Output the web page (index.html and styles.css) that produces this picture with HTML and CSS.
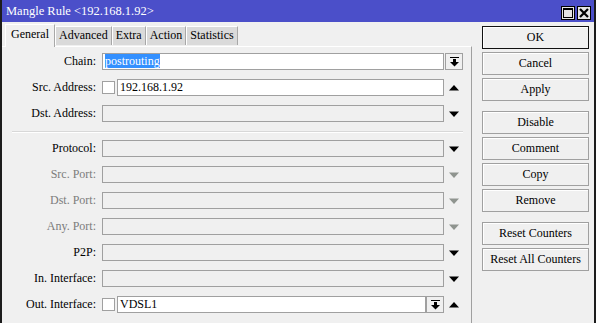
FILE: index.html
```html
<!DOCTYPE html>
<html lang="en">

<head>
    <meta charset="UTF-8">
    <title>Mangle Rule</title>
    <link rel="stylesheet" href="styles.css">
</head>

<body>
    <div class="window">
        <div class="titlebar">
            <span class="title">Mangle Rule &lt;192.168.1.92&gt;</span>
            <div class="controls">
                <div class="ctl">
                    <svg width="10" height="10" viewBox="0 0 10 10">
                        <rect x="0.5" y="0.5" width="9" height="9" fill="none" stroke="#000" />
                        <rect x="0" y="0" width="10" height="2" fill="#000" />
                    </svg>
                </div>
                <div class="ctl">
                    <svg width="10" height="10" viewBox="0 0 10 10">
                        <path d="M1 1 L9 9 M9 1 L1 9" stroke="#000" stroke-width="2.2" />
                    </svg>
                </div>
            </div>
        </div>

        <div class="main">
            <div class="left">
                <div class="tabs">
                    <div class="tab active">General</div>
                    <div class="tab">Advanced</div>
                    <div class="tab">Extra</div>
                    <div class="tab">Action</div>
                    <div class="tab">Statistics</div>
                </div>
                <div class="panel">
                    <div class="row">
                        <div class="label">Chain:</div>
                        <div class="field">
                            <div class="input"><span class="selected">postrouting</span></div>
                        </div>
                        <div class="side">
                            <div class="drop">
                                <svg width="9" height="10" viewBox="0 0 9 10">
                                    <rect x="0" y="0" width="9" height="1" fill="#000" />
                                    <rect x="3" y="2" width="3" height="3" fill="#000" />
                                    <polygon points="0,5 9,5 4.5,9.5" fill="#000" />
                                </svg>
                            </div>
                        </div>
                    </div>
                    <div class="row">
                        <div class="label">Src. Address:</div>
                        <div class="field">
                            <div class="check"></div>
                            <div class="input">192.168.1.92</div>
                        </div>
                        <div class="side">
                            <svg width="10" height="6" viewBox="0 0 10 6"><polygon points="0,5.5 10,5.5 5,0" fill="#000" /></svg>
                        </div>
                    </div>
                    <div class="row">
                        <div class="label">Dst. Address:</div>
                        <div class="field">
                            <div class="input off"></div>
                        </div>
                        <div class="side">
                            <svg width="10" height="6" viewBox="0 0 10 6"><polygon points="0,0.5 10,0.5 5,6" fill="#000" /></svg>
                        </div>
                    </div>

                    <div class="separator"></div>

                    <div class="row">
                        <div class="label">Protocol:</div>
                        <div class="field">
                            <div class="input off"></div>
                        </div>
                        <div class="side">
                            <svg width="10" height="6" viewBox="0 0 10 6"><polygon points="0,0.5 10,0.5 5,6" fill="#000" /></svg>
                        </div>
                    </div>
                    <div class="row disabled">
                        <div class="label">Src. Port:</div>
                        <div class="field">
                            <div class="input off"></div>
                        </div>
                        <div class="side">
                            <svg width="10" height="6" viewBox="0 0 10 6"><polygon points="0,0.5 10,0.5 5,6" fill="#8f948f" /></svg>
                        </div>
                    </div>
                    <div class="row disabled">
                        <div class="label">Dst. Port:</div>
                        <div class="field">
                            <div class="input off"></div>
                        </div>
                        <div class="side">
                            <svg width="10" height="6" viewBox="0 0 10 6"><polygon points="0,0.5 10,0.5 5,6" fill="#8f948f" /></svg>
                        </div>
                    </div>
                    <div class="row disabled">
                        <div class="label">Any. Port:</div>
                        <div class="field">
                            <div class="input off"></div>
                        </div>
                        <div class="side">
                            <svg width="10" height="6" viewBox="0 0 10 6"><polygon points="0,0.5 10,0.5 5,6" fill="#8f948f" /></svg>
                        </div>
                    </div>
                    <div class="row">
                        <div class="label">P2P:</div>
                        <div class="field">
                            <div class="input off"></div>
                        </div>
                        <div class="side">
                            <svg width="10" height="6" viewBox="0 0 10 6"><polygon points="0,0.5 10,0.5 5,6" fill="#000" /></svg>
                        </div>
                    </div>
                    <div class="row">
                        <div class="label">In. Interface:</div>
                        <div class="field">
                            <div class="input off"></div>
                        </div>
                        <div class="side">
                            <svg width="10" height="6" viewBox="0 0 10 6"><polygon points="0,0.5 10,0.5 5,6" fill="#000" /></svg>
                        </div>
                    </div>
                    <div class="row">
                        <div class="label">Out. Interface:</div>
                        <div class="field">
                            <div class="check"></div>
                            <div class="input">VDSL1</div>
                            <div class="drop">
                                <svg width="9" height="10" viewBox="0 0 9 10">
                                    <rect x="0" y="0" width="9" height="1" fill="#000" />
                                    <rect x="3" y="2" width="3" height="3" fill="#000" />
                                    <polygon points="0,5 9,5 4.5,9.5" fill="#000" />
                                </svg>
                            </div>
                        </div>
                        <div class="side">
                            <svg width="10" height="6" viewBox="0 0 10 6"><polygon points="0,5.5 10,5.5 5,0" fill="#000" /></svg>
                        </div>
                    </div>
                </div>
            </div>

            <div class="buttons">
                <button class="default">OK</button>
                <button>Cancel</button>
                <button>Apply</button>
                <button class="group">Disable</button>
                <button>Comment</button>
                <button>Copy</button>
                <button>Remove</button>
                <button class="group">Reset Counters</button>
                <button>Reset All Counters</button>
            </div>
        </div>
    </div>
</body>

</html>
```

FILE: styles.css
```css
/*General*/
* {
    margin: 0;
    padding: 0;
    box-sizing: border-box;
}

body {
    font-family: 'Liberation Serif', serif;
    font-size: 12px;
    color: #000;
    background-color: #f0f0f0;
}

/*Window*/
.window {
    width: 596px;
    height: 323px;
    display: flex;
    flex-direction: column;
    border-left: 2px solid #1c1c1c;
    border-right: 2px solid #1c1c1c;
    background-color: #f0f0f0;
    overflow: hidden;
}

/*Title bar*/
.titlebar {
    height: 22px;
    display: flex;
    align-items: center;
    justify-content: space-between;
    padding: 0 3px 0 4px;
    background-color: #4b4fc9;
    color: #fff;
}

.titlebar .title {
    font-size: 12.5px;
}

.controls {
    display: flex;
    gap: 2px;
    margin-top: 3px;
}

.ctl {
    width: 14px;
    height: 14px;
    display: flex;
    align-items: center;
    justify-content: center;
    border: 1px solid #000;
    background-color: #e4e4e4;
}

/*Main*/
.main {
    flex: 1;
    display: flex;
    flex-direction: row;
}

.left {
    width: 470px;
    display: flex;
    flex-direction: column;
    padding-top: 2px;
}

/*Tabs*/
.tabs {
    height: 22px;
    display: flex;
    align-items: flex-end;
    padding-left: 3px;
    position: relative;
    z-index: 1;
}

.tab {
    height: 19px;
    line-height: 17px;
    padding: 0 3px;
    margin-bottom: 1px;
    background-color: #dadada;
    border-top: 1px solid #fff;
    border-left: 1px solid #fff;
    border-right: 1px solid #a8a8a8;
    white-space: nowrap;
}

.tab.active {
    height: 23px;
    line-height: 19px;
    margin-bottom: -1px;
    padding: 0 5px;
    background-color: #f0f0f0;
}

/*Panel*/
.panel {
    flex: 1;
    padding-top: 6px;
    border-top: 1px solid #fff;
    border-right: 1px solid #a0a0a0;
}

.row {
    height: 17px;
    display: flex;
    align-items: center;
    margin-bottom: 9px;
}

.row .label {
    width: 94px;
    text-align: right;
    margin-right: 6px;
    white-space: nowrap;
}

.row.disabled .label {
    color: #7c7c7c;
}

.field {
    width: 342px;
    height: 17px;
    display: flex;
}

.input {
    flex: 1;
    height: 17px;
    line-height: 15px;
    padding-left: 2px;
    border: 1px solid #a0a0a0;
    background-color: #fff;
    white-space: nowrap;
}

.input.off {
    background-color: #f0f0f0;
}

.selected {
    background-color: #3390ff;
    color: #fff;
}

.check {
    width: 13px;
    height: 13px;
    margin: 2px 2px 0 0;
    border: 1px solid #a0a0a0;
    background-color: #fff;
}

.drop {
    width: 18px;
    height: 17px;
    display: flex;
    align-items: center;
    justify-content: center;
    border: 1px solid #a0a0a0;
    background-color: #f0f0f0;
}

.side {
    width: 18px;
    margin-left: 1px;
    display: flex;
    justify-content: center;
}

.separator {
    height: 2px;
    margin: 0 8px 7px 10px;
    border-top: 1px solid #d8d8d8;
    border-bottom: 1px solid #fff;
}

/*Buttons*/
.buttons {
    width: 107px;
    margin-left: 10px;
    padding-top: 4px;
    display: flex;
    flex-direction: column;
    gap: 3px;
}

.buttons button {
    height: 23px;
    font-family: inherit;
    font-size: 12px;
    color: #000;
    background-color: #f0f0f0;
    border: 1px solid #a0a0a0;
    box-shadow: inset 1px 1px 0 #fff;
    white-space: nowrap;
}

.buttons button.default {
    border: 1px solid #111;
}

.buttons button.group {
    margin-top: 7px;
}
```
